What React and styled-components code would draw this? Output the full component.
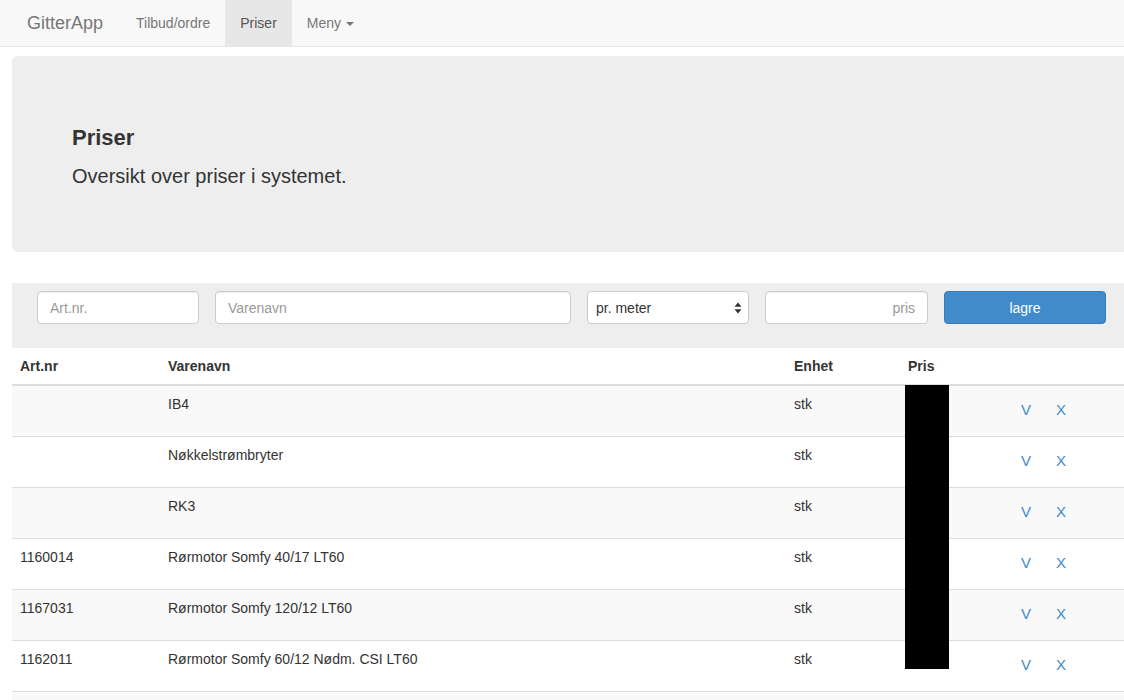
import React from "react";
import styled, { createGlobalStyle } from "styled-components";

const GlobalStyle = createGlobalStyle`
  html, body {
    margin: 0;
    padding: 0;
    overflow: hidden;
    background: #fff;
  }
  body {
    font-family: "Liberation Sans", Arial, sans-serif;
    font-size: 14px;
    line-height: 20px;
    color: #333;
  }
  * { box-sizing: border-box; }
`;

const rows = [
  { artnr: "", navn: "IB4", enhet: "stk" },
  { artnr: "", navn: "Nøkkelstrømbryter", enhet: "stk" },
  { artnr: "", navn: "RK3", enhet: "stk" },
  { artnr: "1160014", navn: "Rørmotor Somfy 40/17 LT60", enhet: "stk" },
  { artnr: "1167031", navn: "Rørmotor Somfy 120/12 LT60", enhet: "stk" },
  { artnr: "1162011", navn: "Rørmotor Somfy 60/12 Nødm. CSI LT60", enhet: "stk" },
];

export default function App() {
  return (
    <>
      <GlobalStyle />
      <Navbar>
        <Brand>GitterApp</Brand>
        <NavLink>Tilbud/ordre</NavLink>
        <NavLink active>Priser</NavLink>
        <NavLink>
          Meny <Caret />
        </NavLink>
      </Navbar>

      <Page>
        <Jumbotron>
          <h3>Priser</h3>
          <p>Oversikt over priser i systemet.</p>
        </Jumbotron>

        <FormBar>
          <Input placeholder="Art.nr." />
          <Input placeholder="Varenavn" />
          <SelectWrap>
            <Select defaultValue="meter">
              <option value="meter">pr. meter</option>
              <option value="stk">stk</option>
            </Select>
            <svg width="8" height="12" viewBox="0 0 8 12">
              <path d="M4 0.5 L7.5 4.8 L0.5 4.8 Z" fill="#333" />
              <path d="M4 11.5 L7.5 7.2 L0.5 7.2 Z" fill="#333" />
            </svg>
          </SelectWrap>
          <Input placeholder="pris" align="right" />
          <SaveButton>lagre</SaveButton>
        </FormBar>

        <TableWrap>
          <Table>
            <colgroup>
              <col style={{ width: 148 }} />
              <col style={{ width: 626 }} />
              <col style={{ width: 114 }} />
              <col style={{ width: 94 }} />
              <col />
            </colgroup>
            <thead>
              <tr>
                <Th>Art.nr</Th>
                <Th>Varenavn</Th>
                <Th>Enhet</Th>
                <Th>Pris</Th>
                <Th />
              </tr>
            </thead>
            <tbody>
              {rows.map((r, i) => (
                <Row key={i} striped={i % 2 === 0}>
                  <Td>{r.artnr}</Td>
                  <Td>{r.navn}</Td>
                  <Td>{r.enhet}</Td>
                  <Td />
                  <Td>
                    <Actions>
                      <LinkButton>V</LinkButton>
                      <LinkButton>X</LinkButton>
                    </Actions>
                  </Td>
                </Row>
              ))}
              <Row striped>
                <Td colSpan={5} />
              </Row>
            </tbody>
          </Table>
          <Redacted />
        </TableWrap>
      </Page>
    </>
  );
}

const Navbar = styled.nav`
  height: 47px;
  width: 1170px;
  background: #f8f8f8;
  border-bottom: 1px solid #e7e7e7;
  display: flex;
  align-items: stretch;
  padding-left: 12px;
`;

const Brand = styled.a`
  display: flex;
  align-items: center;
  padding: 0 15px;
  font-size: 18px;
  color: #777;
  margin-right: 3px;
`;

const NavLink = styled.a`
  display: flex;
  align-items: center;
  gap: 5px;
  padding: 0 15px;
  font-size: 14px;
  color: ${(p) => (p.active ? "#555" : "#777")};
  background: ${(p) => (p.active ? "#e7e7e7" : "transparent")};
`;

const Caret = styled.span`
  display: inline-block;
  width: 0;
  height: 0;
  border-top: 4px solid #777;
  border-left: 4px solid transparent;
  border-right: 4px solid transparent;
  margin-top: 2px;
`;

const Page = styled.div`
  width: 1200px;
  padding-left: 12px;
  padding-top: 9px;
`;

const Jumbotron = styled.div`
  height: 196px;
  background: #eee;
  border-radius: 6px;
  padding: 67px 60px 0;

  h3 {
    margin: 0;
    font-size: 22px;
    line-height: 30px;
    font-weight: bold;
    color: #333;
  }
  p {
    margin: 10px 0 0;
    font-size: 20px;
    line-height: 26px;
    color: #333;
  }
`;

const FormBar = styled.div`
  margin-top: 31px;
  height: 65px;
  background: #eee;
  display: grid;
  grid-template-columns: 162px 356px 162px 163px 162px;
  column-gap: 16px;
  align-items: start;
  padding: 8px 0 0 25px;
`;

const Input = styled.input`
  height: 33px;
  border: 1px solid #ccc;
  border-radius: 4px;
  background: #fff;
  padding: 6px 12px;
  font-family: inherit;
  font-size: 14px;
  color: #555;
  text-align: ${(p) => p.align || "left"};
  box-shadow: inset 0 1px 1px rgba(0, 0, 0, 0.075);
  outline: none;

  &::placeholder {
    color: #999;
  }
`;

const SelectWrap = styled.div`
  position: relative;
  height: 33px;

  svg {
    position: absolute;
    right: 7px;
    top: 11px;
    pointer-events: none;
  }
`;

const Select = styled.select`
  width: 100%;
  height: 33px;
  appearance: none;
  border: 1px solid #ccc;
  border-radius: 4px;
  background: #fff;
  padding: 0 8px;
  font-family: inherit;
  font-size: 14px;
  color: #333;
  outline: none;
`;

const SaveButton = styled.button`
  height: 33px;
  border: 1px solid #357ebd;
  border-radius: 4px;
  background: #428bca;
  color: #fff;
  font-family: inherit;
  font-size: 14px;
  cursor: pointer;
`;

const TableWrap = styled.div`
  position: relative;
`;

const Table = styled.table`
  width: 100%;
  border-collapse: collapse;
  table-layout: fixed;
`;

const Th = styled.th`
  text-align: left;
  font-weight: bold;
  padding: 7px 8px 8px;
  height: 37px;
  vertical-align: bottom;
  border-bottom: 2px solid #ddd;
`;

const Row = styled.tr`
  background: ${(p) => (p.striped ? "#f9f9f9" : "#fff")};
`;

const Td = styled.td`
  padding: 8px;
  height: 51px;
  vertical-align: top;
  border-top: 1px solid #ddd;
`;

const Actions = styled.div`
  display: flex;
  margin-left: 7px;
`;

const LinkButton = styled.a`
  font-size: 15px;
  line-height: 20px;
  padding: 6px 6px 8px 12px;
  width: 35px;
  color: #428bca;
  cursor: pointer;
`;

const Redacted = styled.div`
  position: absolute;
  left: 893px;
  top: 37px;
  width: 44px;
  height: 284px;
  background: #000;
`;
